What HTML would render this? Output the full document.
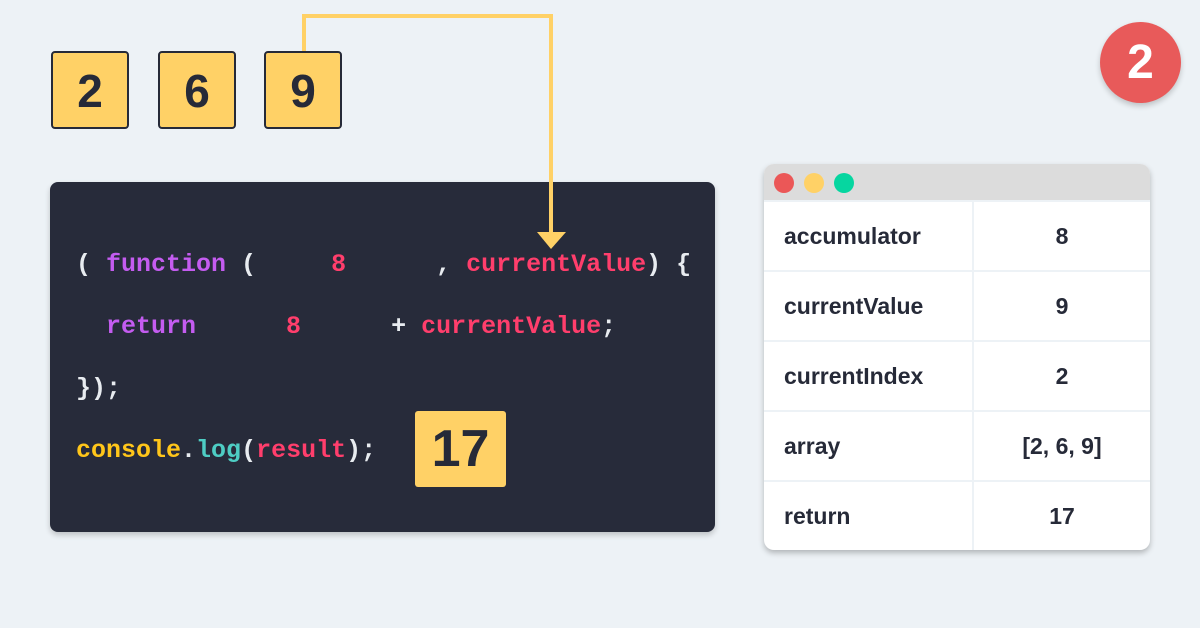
<!DOCTYPE html>
<html><head><meta charset="utf-8"><style>
*{margin:0;padding:0;box-sizing:border-box}
body{width:1200px;height:628px;background:#edf2f6;position:relative;overflow:hidden;font-family:"Liberation Sans",sans-serif}
.nb{position:absolute;top:51px;width:78px;height:78px;background:#ffd166;border:2px solid #262a38;border-radius:4px;font:bold 46px "Liberation Sans",sans-serif;color:#262a38;text-align:center;line-height:76px}
.code{position:absolute;left:50px;top:182px;width:665px;height:350px;background:#272b3a;border-radius:8px;box-shadow:0 3px 6px rgba(0,0,0,.2)}
.ln{position:absolute;left:76px;font:bold 25px "Liberation Mono",monospace;white-space:pre;color:#e8ecf0;line-height:30px}
.p{color:#c45cf0}.r{color:#ff3e6c}.y{color:#ffc61a}.c{color:#4ecdc4}
.box17{position:absolute;left:415px;top:411px;width:91px;height:76px;background:#ffd166;border-radius:3px;font:bold 52px "Liberation Sans",sans-serif;color:#262a38;text-align:center;line-height:76px}
.badge{position:absolute;left:1100px;top:22px;width:81px;height:81px;border-radius:50%;background:#e85a5a;color:#fff;font:bold 48px "Liberation Sans",sans-serif;text-align:center;line-height:81px;box-shadow:0 3px 6px rgba(0,0,0,.2)}
.win{position:absolute;left:764px;top:164px;width:386px;height:386px;background:#fff;border-radius:10px;overflow:hidden;box-shadow:0 3px 6px rgba(0,0,0,.25)}
.bar{height:36px;background:#dcdcdc;position:relative}
.dot{position:absolute;top:9px;width:20px;height:20px;border-radius:50%}
.row{height:70px;border-top:2px solid #edf2f6;display:flex;font:bold 23px "Liberation Sans",sans-serif;color:#262a38}
.row:first-of-type{border-top:none}
.k{width:210px;border-right:2px solid #edf2f6;padding-left:20px;line-height:68px}
.v{flex:1;text-align:center;line-height:68px}
</style></head><body>
<div class="nb" style="left:51px">2</div>
<div class="nb" style="left:158px">6</div>
<div class="nb" style="left:264px">9</div>
<div class="badge">2</div>
<div class="code"></div>
<svg style="position:absolute;left:0;top:0" width="1200" height="628">
<polyline points="304,51 304,16 551,16 551,234" fill="none" stroke="#ffd166" stroke-width="4"/>
<polygon points="537,232 566,232 551,249" fill="#ffd166"/>
</svg>
<div class="ln" style="top:250px">( <span class="p">function</span> (     <span class="r">8</span>      , <span class="r">currentValue</span>) {</div>
<div class="ln" style="top:312px">  <span class="p">return</span>      <span class="r">8</span>      + <span class="r">currentValue</span>;</div>
<div class="ln" style="top:374px">});</div>
<div class="ln" style="top:436px"><span class="y">console</span>.<span class="c">log</span>(<span class="r">result</span>);</div>
<div class="box17">17</div>
<div class="win">
<div class="bar"><div class="dot" style="left:10px;background:#eb5757"></div><div class="dot" style="left:40px;background:#ffd166"></div><div class="dot" style="left:70px;background:#06d6a0"></div></div>
<div class="row"><div class="k">accumulator</div><div class="v">8</div></div>
<div class="row"><div class="k">currentValue</div><div class="v">9</div></div>
<div class="row"><div class="k">currentIndex</div><div class="v">2</div></div>
<div class="row"><div class="k">array</div><div class="v">[2, 6, 9]</div></div>
<div class="row"><div class="k">return</div><div class="v">17</div></div>
</div>
</body></html>
